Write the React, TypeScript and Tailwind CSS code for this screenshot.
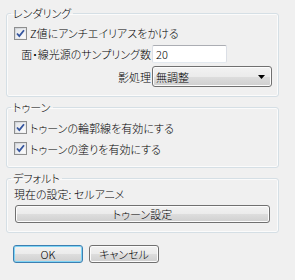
import React from "react";

function Check() {
  return (
    <span className="w-[13px] h-[13px] shrink-0 border border-[#8e8f8f] bg-[linear-gradient(135deg,#cbcfd5,#f7f7f7)] p-[1px] flex">
      <span className="flex-1 bg-[linear-gradient(135deg,#e4e6e9,#fbfbfb)] flex items-center justify-center">
        <svg width="9" height="9" viewBox="0 0 9 9">
          <path d="M1 4.5 L3.3 7 L8 1.2" fill="none" stroke="#34559f" strokeWidth="1.8" />
        </svg>
      </span>
    </span>
  );
}

function CheckRow({ label, className = "" }: { label: string; className?: string }) {
  return (
    <div className={"flex items-center gap-[3px] " + className}>
      <Check />
      <span className="leading-[14px]">{label}</span>
    </div>
  );
}

const grad =
  "bg-[linear-gradient(to_bottom,#f2f2f2_0%,#ebebeb_50%,#dddddd_51%,#cfcfcf_100%)]";
const btn =
  "border border-[#707070] rounded-[3px] " +
  grad +
  " flex items-center justify-center leading-[14px] shadow-[inset_0_0_0_1px_#fcfcfc]";

export default function App() {
  return (
    <div className="w-[295px] h-[280px] overflow-hidden bg-[#f0f0f0] text-[11px] font-light text-black font-['Noto_Sans_CJK_JP','Noto_Sans',sans-serif] [font-feature-settings:'palt']">
      <div className="pl-[6px] pt-[6px]">
        <fieldset className="w-[273px] border border-[#d5dfe5] rounded-[3px] shadow-[inset_0_0_0_1px_#fbfbfb]">
          <legend className="ml-[4px] px-[2px] leading-[14px]">レンダリング</legend>
          <div className="pl-[7px] pr-[6px] pt-[5px] pb-[9px]">
            <CheckRow label="Z値にアンチエイリアスをかける" className="h-[16px]" />
            <div className="grid grid-cols-[137px_1fr] gap-x-[1px] mt-[4px] items-center">
              <span className="text-right leading-[14px] whitespace-nowrap pl-[2px]">面・線光源のサンプリング数</span>
              <div className="w-[75px] h-[18px] border border-[#abadb3] border-l-[#dbdfe6] border-r-[#dbdfe6] border-b-[#e3e9ef] bg-white rounded-[2px] flex items-center pl-[3px] leading-[14px]">
                20
              </div>
              <span className="text-right leading-[14px] mt-[3px]">影処理</span>
              <div className={"mt-[3px] w-[120px] h-[21px] border border-[#707070] rounded-[3px] " + grad + " shadow-[inset_0_0_0_1px_#fcfcfc] flex items-center pl-[3px] pr-[6px] leading-[14px]"}>
                <span className="flex-1">無調整</span>
                <svg width="7" height="4" viewBox="0 0 7 4">
                  <path d="M0 0 H7 L3.5 4 Z" fill="#000" />
                </svg>
              </div>
            </div>
          </div>
        </fieldset>

        <fieldset className="mt-[3px] w-[273px] border border-[#d5dfe5] rounded-[3px] shadow-[inset_0_0_0_1px_#fbfbfb]">
          <legend className="ml-[4px] px-[2px] leading-[14px]">トゥーン</legend>
          <div className="pl-[7px] pt-[5px] pb-[10px] flex flex-col gap-[4px]">
            <CheckRow label="トゥーンの輪郭線を有効にする" className="h-[17px]" />
            <CheckRow label="トゥーンの塗りを有効にする" className="h-[17px]" />
          </div>
        </fieldset>

        <fieldset className="mt-[4px] w-[273px] border border-[#d5dfe5] rounded-[3px] shadow-[inset_0_0_0_1px_#fbfbfb]">
          <legend className="ml-[4px] px-[2px] leading-[13px]">デフォルト</legend>
          <div className="pl-[7px] pt-[2px] pb-[9px]">
            <div className="h-[14px] leading-[14px]">現在の設定: セルアニメ</div>
            <div className={btn + " mt-[4px] ml-[1px] w-[255px] h-[18px]"}>トゥーン設定</div>
          </div>
        </fieldset>

        <div className="flex gap-[6px] mt-[12px] ml-[7px]">
          <div className={"w-[70px] h-[18px] border border-[#3c7fb1] rounded-[3px] " + grad + " shadow-[inset_0_0_0_1px_#7fd4f5] flex items-center justify-center leading-[14px]"}>
            OK
          </div>
          <div className={btn + " w-[70px] h-[18px]"}>キャンセル</div>
        </div>
      </div>
    </div>
  );
}
